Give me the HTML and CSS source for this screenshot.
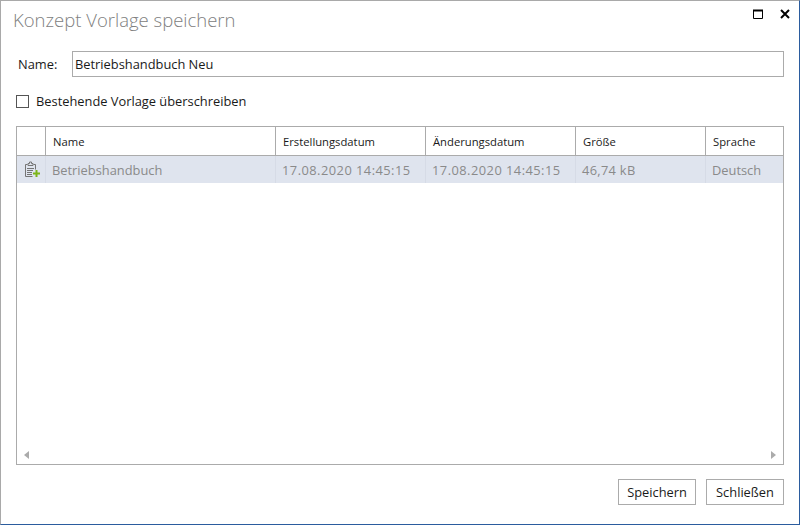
FILE: index.html
```html
<!DOCTYPE html>
<html lang="de">
  <head>
    <meta charset="UTF-8" />
    <title>Konzept Vorlage speichern</title>
    <link rel="stylesheet" href="styles.css">
  </head>
  <body>
    <div class="window">
      <div class="title-bar">
        <span class="title">Konzept Vorlage speichern</span>
        <div class="window-buttons">
          <svg width="10" height="10" viewBox="0 0 10 10"><path d="M0.5 1.5h9v8h-9z" fill="none" stroke="#000"/><path d="M0 0.5h10v2h-10z" fill="#000"/></svg>
          <svg width="10" height="10" viewBox="0 0 10 10"><path d="M1 1l8 8M9 1l-8 8" fill="none" stroke="#000" stroke-width="2"/></svg>
        </div>
      </div>

      <div class="name-row">
        <label for="name-input">Name:</label>
        <input type="text" id="name-input" value="Betriebshandbuch Neu" />
      </div>

      <div class="check-row">
        <span class="check-box"></span>
        <span>Bestehende Vorlage überschreiben</span>
      </div>

      <div class="table">
        <div class="grid-row header-row">
          <div class="cell icon-cell"></div>
          <div class="cell">Name</div>
          <div class="cell">Erstellungsdatum</div>
          <div class="cell">Änderungsdatum</div>
          <div class="cell">Größe</div>
          <div class="cell">Sprache</div>
        </div>
        <div class="grid-row data-row">
          <div class="cell icon-cell">
            <svg width="17" height="17" viewBox="0 0 17 17">
              <path d="M4.500 3.500h-2v12h7M10.500 3.500h2v5" fill="none" stroke="#757575"/>
              <path d="M5.500 4.500v-2h1.500v-1.500h2v1.500h1.500v2z" fill="none" stroke="#757575" transform="translate(-0.500 0)"/>
              <path d="M4 7.500h7M4 9.500h6M4 11.500h5M4 13.500h5" fill="none" stroke="#757575"/>
              <path d="M10 12.500h7M13.500 9v7" fill="none" stroke="#7cb518" stroke-width="2"/>
            </svg>
          </div>
          <div class="cell">Betriebshandbuch</div>
          <div class="cell num-cell">17.08.2020 14:45:15</div>
          <div class="cell num-cell">17.08.2020 14:45:15</div>
          <div class="cell size-cell">46,74 kB</div>
          <div class="cell">Deutsch</div>
        </div>
        <div class="table-space"></div>
        <div class="scroll-row">
          <span class="arrow-left"></span>
          <span class="arrow-right"></span>
        </div>
      </div>

      <div class="button-row">
        <button>Speichern</button>
        <button>Schließen</button>
      </div>
    </div>
  </body>
</html>
```

FILE: styles.css
```css
html, body {
  margin: 0;
  height: 100%;
}
body {
  font-family: "Open Sans", "Noto Sans", sans-serif;
  font-size: 12.85px;
  color: #1a1a1a;
  background: #fff;
}
.window {
  box-sizing: border-box;
  height: 525px;
  display: flex;
  flex-direction: column;
  border: 1px solid #a9a9a9;
  border-bottom-color: #2b5c9e;
  border-right-color: #2b5c9e;
  padding: 0 15px 19px 15px;
}
.title-bar {
  display: flex;
  justify-content: space-between;
  height: 50px;
  flex-shrink: 0;
}
.title {
  font-family: "Open Sans", sans-serif;
  font-weight: 300;
  font-size: 18.5px;
  line-height: 37px;
  margin-left: -3px;
  color: #808080;
}
.window-buttons {
  display: flex;
  gap: 17px;
  padding-top: 8px;
  margin-right: -6px;
}
.name-row {
  display: flex;
  align-items: center;
  height: 26px;
}
.name-row label {
  width: 56px;
  padding-left: 2px;
  box-sizing: border-box;
}
.name-row input {
  flex: 1;
  height: 26px;
  box-sizing: border-box;
  border: 1px solid #ababab;
  padding: 0 2px;
  font: inherit;
  color: #1a1a1a;
  outline: none;
}
.check-row {
  display: flex;
  align-items: center;
  gap: 7px;
  margin-top: 17px;
  height: 14px;
}
.check-box {
  width: 11px;
  height: 11px;
  border: 1px solid #555;
}
.table {
  flex: 1;
  display: flex;
  flex-direction: column;
  margin-top: 18px;
  border: 1px solid #ababab;
  min-height: 0;
}
.grid-row {
  display: grid;
  grid-template-columns: 29px 230px 150px 150px 130px 1fr;
}
.header-row {
  height: 28px;
  border-bottom: 1px solid #ababab;
}
.header-row .cell {
  border-right: 1px solid #ababab;
  padding-left: 7px;
  line-height: 29px;
  font-size: 11.25px;
}
.header-row .cell:last-child {
  border-right: none;
}
.data-row {
  height: 27px;
  background: #dfe4ee;
  color: #8a8a8a;
}
.data-row .cell {
  border-right: 1px solid #d6dbe6;
  padding-left: 6px;
  line-height: 29px;
}
.data-row .cell:last-child {
  border-right: none;
}
.cell {
  box-sizing: border-box;
  white-space: nowrap;
  overflow: hidden;
}
.data-row .num-cell {
  letter-spacing: 0.47px;
}
.data-row .size-cell {
  letter-spacing: 0.3px;
}
.data-row .icon-cell {
  padding-left: 6px;
  padding-top: 5px;
  line-height: 0;
}
.table-space {
  flex: 1;
}
.scroll-row {
  display: flex;
  justify-content: space-between;
  align-items: center;
  height: 18px;
  padding: 0 7px;
}
.arrow-left {
  border-right: 5px solid #ababab;
  border-top: 4px solid transparent;
  border-bottom: 4px solid transparent;
}
.arrow-right {
  border-left: 5px solid #ababab;
  border-top: 4px solid transparent;
  border-bottom: 4px solid transparent;
}
.button-row {
  display: flex;
  justify-content: flex-end;
  gap: 10px;
  margin-top: 14px;
}
.button-row button {
  width: 78px;
  height: 26px;
  background: #fff;
  border: 1px solid #ababab;
  font: inherit;
  color: #1a1a1a;
  padding: 0;
}
```
